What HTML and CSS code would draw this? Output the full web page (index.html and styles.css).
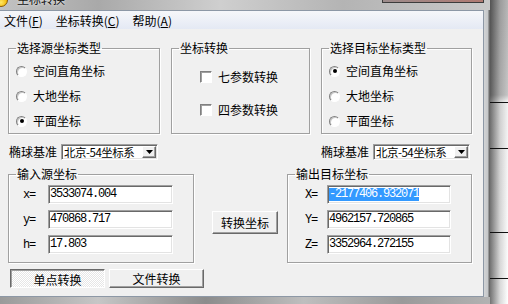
FILE: index.html
```html
<!DOCTYPE html>
<html lang="zh-CN">
<head>
    <meta charset="UTF-8">
    <meta name="viewport" content="width=device-width, initial-scale=1.0">
    <title>坐标转换</title>
    <link rel="stylesheet" href="styles.css">
</head>
<body>
    <div class="screen">
        <div class="window">
            <div class="titlebar">
                <span class="app-icon"></span>
                <span class="title">坐标转换</span>
                <span class="caption-buttons"></span>
            </div>
            <div class="frame">
                <div class="inner">
                    <div class="menubar">
                        <span class="menu-item">文件(<u>F</u>)</span>
                        <span class="menu-item">坐标转换(<u>C</u>)</span>
                        <span class="menu-item">帮助(<u>A</u>)</span>
                    </div>

                    <div class="client">
                        <div class="top-row">
                            <fieldset class="group group-src">
                                <legend>选择源坐标类型</legend>
                                <div class="options">
                                    <div class="option"><span class="radio"></span>空间直角坐标</div>
                                    <div class="option"><span class="radio"></span>大地坐标</div>
                                    <div class="option"><span class="radio on"></span>平面坐标</div>
                                </div>
                            </fieldset>
                            <fieldset class="group group-mode">
                                <legend>坐标转换</legend>
                                <div class="options checks">
                                    <div class="option"><span class="checkbox"></span>七参数转换</div>
                                    <div class="option"><span class="checkbox"></span>四参数转换</div>
                                </div>
                            </fieldset>
                            <fieldset class="group group-dst">
                                <legend>选择目标坐标类型</legend>
                                <div class="options">
                                    <div class="option"><span class="radio on"></span>空间直角坐标</div>
                                    <div class="option"><span class="radio"></span>大地坐标</div>
                                    <div class="option"><span class="radio"></span>平面坐标</div>
                                </div>
                            </fieldset>
                        </div>

                        <div class="datum-row">
                            <div class="datum">
                                <span class="datum-label">椭球基准</span>
                                <div class="combo">
                                    <span class="combo-text">北京-54坐标系</span>
                                    <span class="combo-btn">
                                        <svg width="7" height="4" viewBox="0 0 7 4"><path d="M0 0h7L3.5 4z" fill="#000"/></svg>
                                    </span>
                                </div>
                            </div>
                            <div class="datum">
                                <span class="datum-label">椭球基准</span>
                                <div class="combo">
                                    <span class="combo-text">北京-54坐标系</span>
                                    <span class="combo-btn">
                                        <svg width="7" height="4" viewBox="0 0 7 4"><path d="M0 0h7L3.5 4z" fill="#000"/></svg>
                                    </span>
                                </div>
                            </div>
                        </div>

                        <div class="coord-row">
                            <fieldset class="group group-in">
                                <legend>输入源坐标</legend>
                                <div class="fields">
                                    <div class="field"><span class="field-label">x=</span><div class="edit">3533074.004</div></div>
                                    <div class="field"><span class="field-label">y=</span><div class="edit">470868.717</div></div>
                                    <div class="field"><span class="field-label">h=</span><div class="edit">17.803</div></div>
                                </div>
                            </fieldset>
                            <button class="btn btn-convert">转换坐标</button>
                            <fieldset class="group group-out">
                                <legend>输出目标坐标</legend>
                                <div class="fields">
                                    <div class="field"><span class="field-label">X=</span><div class="edit"><span class="selected">-2177406.932071</span></div></div>
                                    <div class="field"><span class="field-label">Y=</span><div class="edit">4962157.720865</div></div>
                                    <div class="field"><span class="field-label">Z=</span><div class="edit">3352964.272155</div></div>
                                </div>
                            </fieldset>
                        </div>

                        <div class="tab-row">
                            <button class="btn tab pressed">单点转换</button>
                            <button class="btn tab">文件转换</button>
                        </div>
                    </div>
                </div>
                <div class="frame-right"></div>
            </div>
            <div class="frame-bottom"></div>
        </div>
        <div class="behind"></div>
    </div>
</body>
</html>
```

FILE: styles.css
```css
* {
    box-sizing: border-box;
}
body {
    margin: 0;
    font-family: "Noto Sans CJK SC", sans-serif;
    font-size: 12px;
    color: #000;
}
.screen {
    display: flex;
    width: 508px;
    height: 304px;
    overflow: hidden;
}
.window {
    width: 490px;
    display: flex;
    flex-direction: column;
}

/* glass title bar, only its lower edge is in view */
.titlebar {
    height: 10px;
    display: flex;
    align-items: flex-start;
    overflow: hidden;
    background: linear-gradient(to right, #c2c2c2, #a9a9a9 20%, #cfcfcf 45%, #b4b4b4 70%, #c9c9c9);
}
.app-icon {
    width: 14px;
    height: 14px;
    margin: -7px 0 0 -6px;
    border-radius: 50%;
    border: 1px solid #8a5a00;
    background: radial-gradient(circle at 50% 70%, #ffe766, #f2b600 60%, #b67600);
}
.title {
    margin: -8px 0 0 9px;
    line-height: 14px;
    color: #111;
    text-shadow: 0 0 3px #fff;
}
.caption-buttons {
    margin-left: auto;
    margin-right: 6px;
    width: 102px;
    height: 3px;
    border: 1px solid #3c3c3c;
    border-top: none;
    background: linear-gradient(to right, #9c8c8c, #b07a72);
}

.frame {
    flex: 1;
    display: flex;
}
.inner {
    width: 484px;
    display: flex;
    flex-direction: column;
    border: 1px solid #8d98a6;
    border-left: none;
}
.frame-right {
    flex: 1;
    background: linear-gradient(to right, #d2d4d6, #c4c6c8 4px, #6a6a6a 5px);
}
.frame-bottom {
    height: 7px;
    background: linear-gradient(to right, #9a9a9a, #c6c6c6 20%, #8c8c8c 42%, #bebebe 62%, #9a9a9a 82%, #b2b2b2);
}
.behind {
    width: 18px;
    background:
        linear-gradient(#111, #111) 0 102px / 100% 1px no-repeat,
        linear-gradient(#111, #111) 0 148px / 100% 1px no-repeat,
        linear-gradient(#111, #111) 0 232px / 100% 1px no-repeat,
        linear-gradient(#111, #111) 0 278px / 100% 1px no-repeat,
        linear-gradient(to right, rgba(0,0,0,.55), rgba(0,0,0,.15) 10px, rgba(0,0,0,0) 18px),
        linear-gradient(#b6b6b6, #c6c6c6 95px, #f2f2f2 101px, #fff);
}

.menubar {
    height: 18px;
    display: flex;
    align-items: center;
    gap: 13px;
    padding-left: 4px;
    background: linear-gradient(#f6f7fa, #e4e9f4);
}
.menu-item u {
    text-decoration: underline;
    text-underline-offset: 1px;
}

.client {
    flex: 1;
    display: flex;
    flex-direction: column;
    padding: 12px 0 0 8px;
    background: #f0f0f0;
}

/* group boxes */
.group {
    margin: 0;
    min-width: 0;
    padding: 0 0 0 7px;
    border: 1px solid #a0a0a0;
    box-shadow: inset 1px 1px 0 #fff, 1px 1px 0 #fff;
}
.group legend {
    padding: 0 1px;
    line-height: 14px;
}
.top-row {
    display: flex;
    gap: 11px;
}
.top-row .group {
    height: 93px;
}
.group-src {
    width: 152px;
}
.group-mode {
    width: 139px;
}
.group-dst {
    width: 151px;
}
.options {
    display: flex;
    flex-direction: column;
    gap: 11px;
    padding-top: 9px;
}
.options.checks {
    gap: 19px;
    padding: 15px 0 0 21px;
}
.option {
    display: flex;
    align-items: center;
    height: 14px;
    line-height: 14px;
}
.radio {
    width: 11px;
    height: 11px;
    margin-right: 6px;
    border-radius: 50%;
    border: 1px solid;
    border-color: #808080 #fff #fff #808080;
    background: #fff;
    box-shadow: inset 1px 1px 0 #c8c8c8;
    display: flex;
    align-items: center;
    justify-content: center;
}
.radio.on::after {
    content: "";
    width: 4px;
    height: 4px;
    border-radius: 50%;
    background: #000;
}
.checkbox {
    width: 12px;
    height: 12px;
    margin-right: 6px;
    border: 1px solid;
    border-color: #808080 #fff #fff #808080;
    background: #fff;
    box-shadow: inset 1px 1px 0 #a0a0a0;
}

/* ellipsoid row */
.datum-row {
    display: flex;
    justify-content: space-between;
    margin-top: 9px;
    padding: 0 13px 0 1px;
}
.datum {
    display: flex;
    align-items: center;
    gap: 4px;
}
.combo {
    width: 97px;
    height: 16px;
    display: flex;
    align-items: center;
    border: 1px solid;
    border-color: #a0a0a0 #fff #fff #a0a0a0;
    box-shadow: inset 1px 1px 0 #696969, inset -1px -1px 0 #e3e3e3;
    background: #fff;
    padding: 1px 1px 1px 2px;
    overflow: hidden;
}
.combo-text {
    flex: 1;
    font-size: 11.5px;
    letter-spacing: -0.5px;
    line-height: 12px;
    white-space: nowrap;
}
.combo-btn {
    flex: none;
    width: 14px;
    height: 12px;
    display: flex;
    align-items: center;
    justify-content: center;
    background: #f0f0f0;
    border: 1px solid;
    border-color: #fff #696969 #696969 #fff;
    box-shadow: inset -1px -1px 0 #a0a0a0;
}

/* coordinate boxes */
.coord-row {
    display: flex;
    align-items: flex-start;
    margin-top: 7px;
}
.coord-row .group {
    height: 96px;
}
.group-in {
    width: 186px;
}
.group-out {
    width: 185px;
    margin-left: 9px;
}
.fields {
    display: flex;
    flex-direction: column;
    gap: 6px;
    padding: 4px 0 0 7px;
}
.group-out .fields {
    padding-left: 10px;
}
.field {
    display: flex;
    align-items: center;
}
.field-label,
.edit {
    font-family: "Liberation Mono", monospace;
    font-size: 12px;
    letter-spacing: -1.2px;
}
.field-label {
    width: 25px;
}
.group-out .field-label {
    width: 22px;
}
.edit {
    width: 125px;
    height: 19px;
    line-height: 15px;
    padding-left: 1px;
    border: 1px solid;
    border-color: #a0a0a0 #fff #fff #a0a0a0;
    box-shadow: inset 1px 1px 0 #696969, inset -1px -1px 0 #e3e3e3;
    background: #fff;
    display: flex;
    align-items: center;
    white-space: nowrap;
}
.group-out .edit {
    width: 124px;
}
.selected {
    background: #3399ff;
    color: #fff;
    line-height: 13px;
}

/* buttons */
.btn {
    font-family: "Noto Sans CJK SC", sans-serif;
    font-size: 12px;
    color: #000;
    padding: 0;
    background: #f0f0f0;
    border: 1px solid;
    border-color: #fff #696969 #696969 #fff;
    box-shadow: inset -1px -1px 0 #a0a0a0;
}
.btn-convert {
    width: 66px;
    height: 23px;
    margin: 44px 0 0 18px;
}
.tab-row {
    display: flex;
    gap: 4px;
    margin-top: 6px;
    padding-left: 2px;
}
.tab {
    width: 95px;
    height: 19px;
    line-height: 15px;
}
.tab.pressed {
    border-color: #696969 #fff #fff #696969;
    box-shadow: inset 1px 1px 0 #a0a0a0;
    background: repeating-conic-gradient(#fff 0 25%, #e6e6e6 0 50%) 0 0 / 2px 2px;
    padding-top: 1px;
}
```
